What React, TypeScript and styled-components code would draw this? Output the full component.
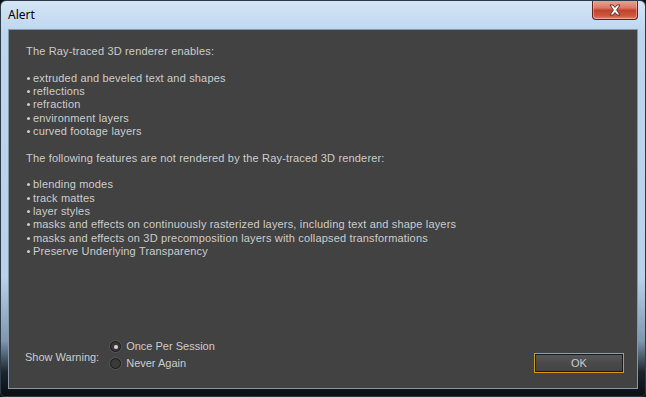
import React from 'react'
import styled, { createGlobalStyle } from 'styled-components'

const GlobalStyle = createGlobalStyle`
  html, body {
    margin: 0;
    padding: 0;
    background: #0b0e12;
  }
`

const Window = styled.div`
  width: 646px;
  height: 397px;
  box-sizing: border-box;
  display: flex;
  flex-direction: column;
  border: 1px solid #2d3a48;
  border-radius: 6px 6px 4px 4px;
  background: linear-gradient(
    to bottom,
    #d4e5f6 0%,
    #bdd6ef 8%,
    #b9d2ec 70%,
    #7f98b1 86%,
    #1c242d 94%,
    #0b0e12 100%
  );
  overflow: hidden;
  font-family: 'Liberation Sans', Arial, sans-serif;
`

const TitleBar = styled.div`
  height: 28px;
  display: flex;
  align-items: flex-start;
  padding-left: 7px;
`

const Title = styled.span`
  font-family: 'Noto Sans', 'Open Sans', sans-serif;
  font-size: 12px;
  color: #000;
  margin-top: 5px;
`

const CloseButton = styled.button`
  margin-left: auto;
  margin-right: 7px;
  margin-top: -1px;
  width: 46px;
  height: 20px;
  padding: 0;
  border: 1px solid #5e2319;
  border-top: none;
  border-radius: 0 0 4px 4px;
  background: linear-gradient(
    to bottom,
    #e9a898 0%,
    #d87c68 40%,
    #c3422c 55%,
    #cf5a40 85%,
    #e18a6c 100%
  );
  display: flex;
  align-items: center;
  justify-content: center;
  box-shadow: inset 0 0 0 1px rgba(255, 200, 190, 0.5);
`

const Client = styled.div`
  flex: 1;
  margin: 0 7px 7px 7px;
  background: #424242;
  border: 1px solid #8597a8;
  display: flex;
  flex-direction: column;
  padding: 15px 13px 15px 17px;
`

const Message = styled.div`
  font-size: 11px;
  line-height: 13.33px;
  letter-spacing: 0.17px;
  color: #cccccc;
  flex: 1;
`

const Line = styled.div`
  white-space: pre;
  min-height: 13.33px;
`

const Bullet = styled.span`
  display: inline-block;
  width: 7px;
  &::before {
    content: '';
    display: inline-block;
    width: 3px;
    height: 3px;
    border-radius: 50%;
    background: #cccccc;
    vertical-align: 2px;
    margin-left: 1px;
  }
`

const Footer = styled.div`
  display: flex;
  align-items: flex-end;
`

const Label = styled.span`
  align-self: center;
  font-size: 11px;
  color: #cccccc;
  margin-left: -1px;
`

const RadioGroup = styled.div`
  display: flex;
  flex-direction: column;
  gap: 4px;
  margin-left: 11px;
  margin-bottom: 3px;
`

const RadioRow = styled.label`
  display: flex;
  align-items: center;
  gap: 5px;
  font-size: 11px;
  line-height: 13px;
  color: #cccccc;
`

const RadioCircle = styled.span<{ $checked?: boolean }>`
  width: 11px;
  height: 11px;
  box-sizing: border-box;
  border-radius: 50%;
  border: 1px solid #1c1c1c;
  background: radial-gradient(circle, #3c3c3c 0%, #353535 100%);
  box-shadow: 0 0 0 1px rgba(120, 120, 120, 0.35);
  display: flex;
  align-items: center;
  justify-content: center;

  &::after {
    content: '';
    display: ${p => (p.$checked ? 'block' : 'none')};
    width: 4px;
    height: 4px;
    border-radius: 50%;
    background: #d8d8d8;
  }
`

const OkButton = styled.button`
  margin-left: auto;
  width: 90px;
  height: 20px;
  box-sizing: border-box;
  border: 1px solid #d49a14;
  padding: 0;
  background: #1e1e1e;
  font-family: 'Liberation Sans', Arial, sans-serif;
  font-size: 11px;
  color: #cccccc;

  span {
    display: flex;
    align-items: center;
    justify-content: center;
    height: 100%;
    box-sizing: border-box;
    border: 1px solid #1a1a1a;
    background: linear-gradient(to bottom, #575757 0%, #4a4a4a 50%, #444444 100%);
  }
`

const enables = [
  'extruded and beveled text and shapes',
  'reflections',
  'refraction',
  'environment layers',
  'curved footage layers',
]

const notRendered = [
  'blending modes',
  'track mattes',
  'layer styles',
  'masks and effects on continuously rasterized layers, including text and shape layers',
  'masks and effects on 3D precomposition layers with collapsed transformations',
  'Preserve Underlying Transparency',
]

function CloseIcon() {
  return (
    <svg width='14' height='12' viewBox='0 0 14 12'>
      <path
        d='M2 1 L5 1 L7 3.5 L9 1 L12 1 L8.6 6 L12 11 L9 11 L7 8.5 L5 11 L2 11 L5.4 6 Z'
        fill='#ffffff'
        stroke='#5a2a22'
        strokeWidth='0.9'
        strokeLinejoin='round'
      />
    </svg>
  )
}

export default function App() {
  return (
    <>
      <GlobalStyle />
      <Window>
        <TitleBar>
          <Title>Alert</Title>
          <CloseButton aria-label='Close'>
            <CloseIcon />
          </CloseButton>
        </TitleBar>
        <Client>
          <Message>
            <Line>The Ray-traced 3D renderer enables:</Line>
            <Line />
            {enables.map(item => (
              <Line key={item}>
                <Bullet />
                {item}
              </Line>
            ))}
            <Line />
            <Line>The following features are not rendered by the Ray-traced 3D renderer:</Line>
            <Line />
            {notRendered.map(item => (
              <Line key={item}>
                <Bullet />
                {item}
              </Line>
            ))}
          </Message>
          <Footer>
            <Label>Show Warning:</Label>
            <RadioGroup>
              <RadioRow>
                <RadioCircle $checked />
                Once Per Session
              </RadioRow>
              <RadioRow>
                <RadioCircle />
                Never Again
              </RadioRow>
            </RadioGroup>
            <OkButton>
              <span>OK</span>
            </OkButton>
          </Footer>
        </Client>
      </Window>
    </>
  )
}
